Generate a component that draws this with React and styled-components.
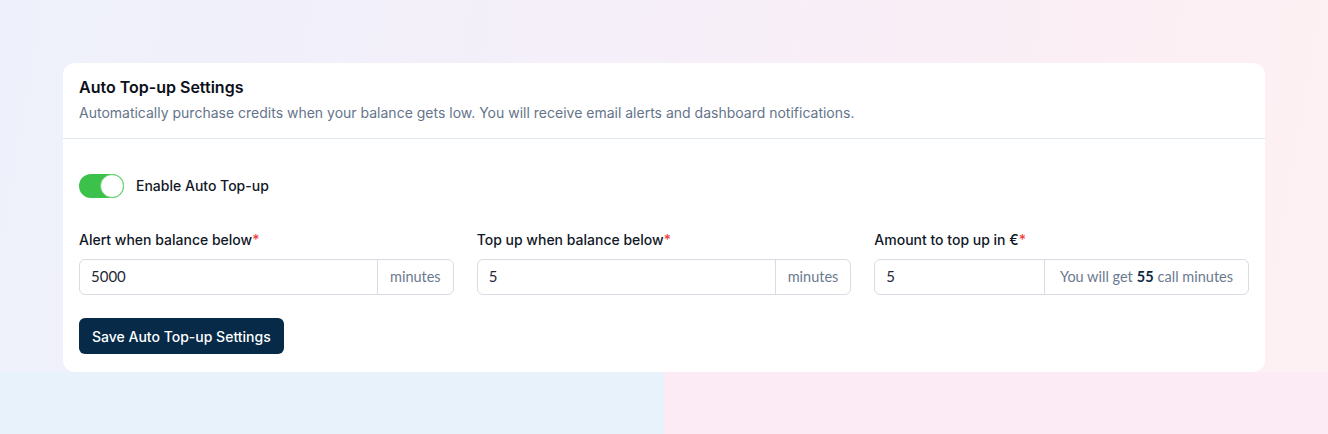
import styled, { createGlobalStyle } from "styled-components";

const GlobalStyle = createGlobalStyle`
  html, body {
    margin: 0;
    padding: 0;
  }
  body {
    font-family: Inter, "Liberation Sans", sans-serif;
    background: linear-gradient(to right, #e8f2fb 50%, #fcebf5 50%);
    min-height: 434px;
  }
`;

export default function App() {
  return (
    <>
      <GlobalStyle />
      <Page>
        <Card>
          <CardHeader>
            <Title>Auto Top-up Settings</Title>
            <Description>
              Automatically purchase credits when your balance gets low. You will receive email alerts and dashboard
              notifications.
            </Description>
          </CardHeader>

          <CardBody>
            <ToggleRow>
              <Switch $on>
                <Knob $on />
              </Switch>
              <ToggleLabel>Enable Auto Top-up</ToggleLabel>
            </ToggleRow>

            <Fields>
              <Field>
                <Label>
                  Alert when balance below<Req>*</Req>
                </Label>
                <InputGroup>
                  <Input defaultValue="5000" />
                  <Addon>minutes</Addon>
                </InputGroup>
              </Field>
              <Field>
                <Label>
                  Top up when balance below<Req>*</Req>
                </Label>
                <InputGroup>
                  <Input defaultValue="5" />
                  <Addon>minutes</Addon>
                </InputGroup>
              </Field>
              <Field>
                <Label>
                  Amount to top up in €<Req>*</Req>
                </Label>
                <InputGroup>
                  <Input defaultValue="5" />
                  <Addon $wide>
                    You will get <b>55</b> call minutes
                  </Addon>
                </InputGroup>
              </Field>
            </Fields>

            <SaveButton>Save Auto Top-up Settings</SaveButton>
          </CardBody>
        </Card>
      </Page>
    </>
  );
}

const Page = styled.div`
  padding: 63px 63px 0 63px;
  background: linear-gradient(100deg, #eef1fb 0%, #f5eff9 45%, #faeef6 70%, #fdf1f3 100%);
`;

const Card = styled.div`
  background: #fff;
  border-radius: 12px;
  display: flex;
  flex-direction: column;
`;

const CardHeader = styled.div`
  padding: 12px 16px 15px;
  border-bottom: 1px solid #e2e8f0;
`;

const Title = styled.h2`
  margin: 0;
  font-size: 16px;
  line-height: 24px;
  font-weight: 600;
  color: #0b0f19;
`;

const Description = styled.p`
  margin: 4px 0 0;
  font-size: 14px;
  line-height: 20px;
  color: #64748b;
`;

const CardBody = styled.div`
  padding: 35px 16px 18px;
  display: flex;
  flex-direction: column;
  align-items: flex-start;
`;

const ToggleRow = styled.div`
  display: flex;
  align-items: center;
  gap: 12px;
`;

const Switch = styled.div`
  width: 45px;
  height: 24px;
  border-radius: 999px;
  background: ${(p) => (p.$on ? "#3cc14b" : "#d1d5db")};
  display: flex;
  align-items: center;
  justify-content: ${(p) => (p.$on ? "flex-end" : "flex-start")};
  box-sizing: border-box;
`;

const Knob = styled.div`
  width: 24px;
  height: 24px;
  border-radius: 50%;
  background: #fff;
  box-sizing: border-box;
  border: 1px solid ${(p) => (p.$on ? "#63d26d" : "#d1d5db")};
`;

const ToggleLabel = styled.span`
  font-size: 14px;
  line-height: 20px;
  font-weight: 500;
  color: #111827;
`;

const Fields = styled.div`
  align-self: stretch;
  display: grid;
  grid-template-columns: repeat(3, minmax(0, 1fr));
  gap: 23px;
  margin-top: 32px;
`;

const Field = styled.div`
  display: flex;
  flex-direction: column;
  gap: 9px;
`;

const Label = styled.label`
  font-size: 14px;
  line-height: 20px;
  font-weight: 500;
  color: #111827;
`;

const Req = styled.span`
  color: #ef4444;
`;

const InputGroup = styled.div`
  display: flex;
  height: 36px;
  box-sizing: border-box;
  border: 1px solid #d9dde3;
  border-radius: 6px;
  overflow: hidden;
  background: #fff;
`;

const Input = styled.input`
  flex: 1;
  min-width: 0;
  border: 0;
  outline: none;
  padding: 0 11px 2px;
  font-family: Lato, "Open Sans", sans-serif;
  font-size: 15px;
  color: #1f2937;
  background: transparent;
`;

const Addon = styled.div`
  display: flex;
  align-items: center;
  padding: 0 ${(p) => (p.$wide ? "15px" : "12px")} 2px;
  border-left: 1px solid #d9dde3;
  font-family: Lato, "Open Sans", sans-serif;
  font-size: 14.5px;
  color: #6b7a90;
  white-space: nowrap;

  b {
    color: #0b2a45;
    font-weight: 700;
    margin: 0 4px;
  }
`;

const SaveButton = styled.button`
  margin-top: 23px;
  height: 36px;
  padding: 0 13px;
  border: 0;
  border-radius: 6px;
  background: #062a47;
  color: #fff;
  font-family: Inter, "Liberation Sans", sans-serif;
  font-size: 14px;
  font-weight: 500;
  cursor: pointer;
`;
